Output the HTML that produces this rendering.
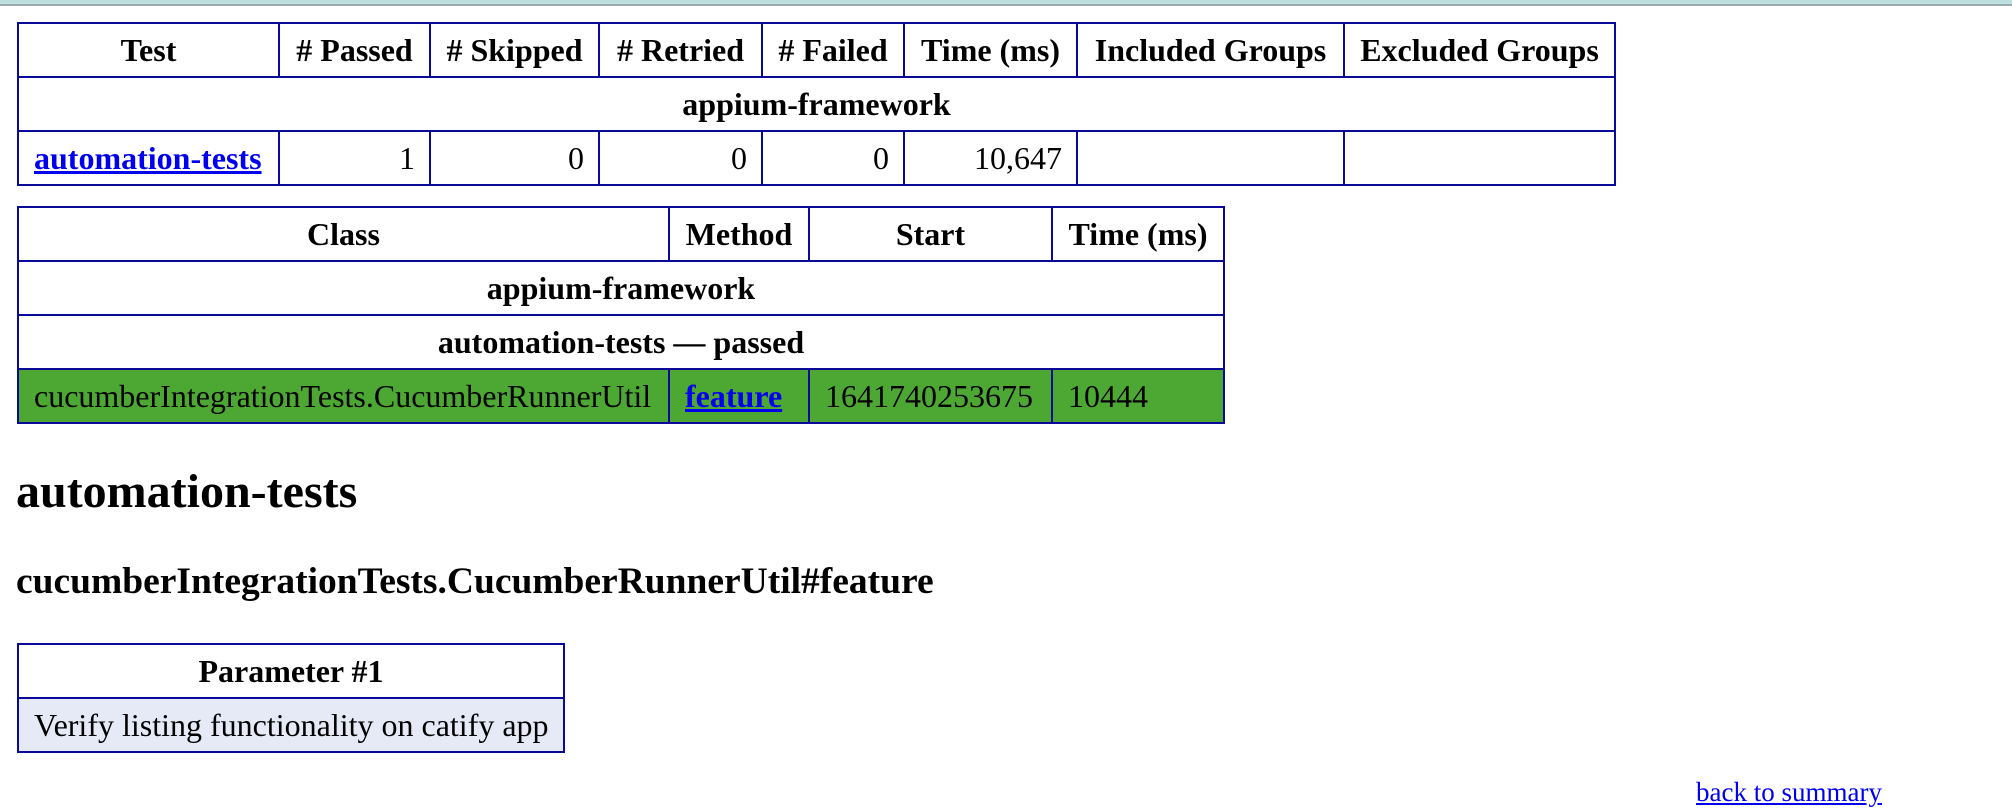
<!DOCTYPE html>
<html><head><meta charset="utf-8"><style>
html,body{margin:0;padding:0;background:#fff;width:2012px;height:808px;overflow:hidden;font-family:"Liberation Serif",serif;}
.bar{position:absolute;left:0;top:0;width:2012px;height:4px;background:#bfe0e0;border-bottom:2px solid #9aabab;}
table{position:absolute;border-collapse:collapse;table-layout:fixed;font-size:32px;}
td,th{border:2px solid #0a0a9a;padding:0 15px;white-space:nowrap;overflow:hidden;}
th{font-weight:bold;text-align:center;padding:0 8px;}
.r{text-align:right;padding-right:14px;}
a{color:#0000ee;text-decoration:underline;}
.g td{background:#4ca832;}
.p td{background:#e6eaf7;}
h2,h3,.bk{position:absolute;margin:0;font-weight:bold;}
</style></head><body>
<div class="bar"></div>
<table style="left:17px;top:22px;width:1597px">
<colgroup><col style="width:261px"><col style="width:151px"><col style="width:169px"><col style="width:163px"><col style="width:142px"><col style="width:173px"><col style="width:267px"><col style="width:271px"></colgroup>
<tr style="height:54px"><th>Test</th><th># Passed</th><th># Skipped</th><th># Retried</th><th># Failed</th><th>Time (ms)</th><th>Included Groups</th><th>Excluded Groups</th></tr>
<tr style="height:54px"><th colspan="8">appium-framework</th></tr>
<tr style="height:54px"><td><b><a href="#">automation-tests</a></b></td><td class="r">1</td><td class="r">0</td><td class="r">0</td><td class="r">0</td><td class="r">10,647</td><td></td><td></td></tr>
</table>
<table style="left:17px;top:206px;width:1206px">
<colgroup><col style="width:651px"><col style="width:140px"><col style="width:243px"><col style="width:172px"></colgroup>
<tr style="height:54px"><th>Class</th><th>Method</th><th>Start</th><th>Time (ms)</th></tr>
<tr style="height:54px"><th colspan="4">appium-framework</th></tr>
<tr style="height:54px"><th colspan="4">automation-tests — passed</th></tr>
<tr class="g" style="height:54px"><td>cucumberIntegrationTests.CucumberRunnerUtil</td><td><b><a href="#">feature</a></b></td><td>1641740253675</td><td>10444</td></tr>
</table>
<h2 style="left:16px;top:464px;font-size:48px;">automation-tests</h2>
<h3 style="left:16px;top:560px;font-size:37.5px;">cucumberIntegrationTests.CucumberRunnerUtil#feature</h3>
<table style="left:17px;top:643px;width:548px">
<tr style="height:54px"><th>Parameter #1</th></tr>
<tr class="p" style="height:54px"><td>Verify listing functionality on catify app</td></tr>
</table>
<div class="bk" style="left:1696px;top:777px;font-size:27px;font-weight:normal;"><a href="#">back to summary</a></div>
</body></html>
